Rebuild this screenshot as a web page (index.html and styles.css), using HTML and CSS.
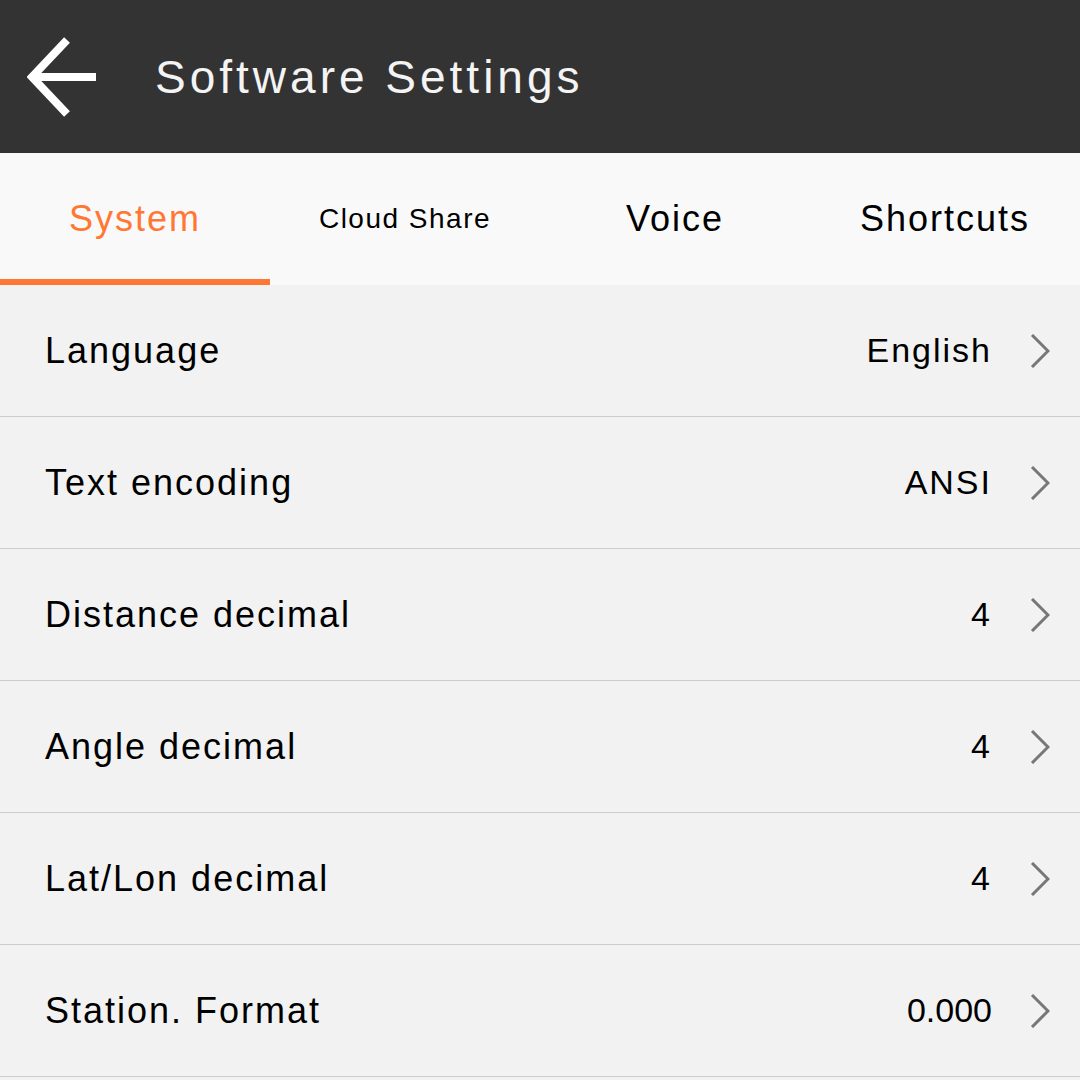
FILE: index.html
```html
<!DOCTYPE html>
<html lang="en">
<head>
  <meta charset="UTF-8">
  <title>Software Settings</title>
  <link rel="stylesheet" href="styles.css">
</head>
<body>

  <div class="topbar">
    <svg class="back" width="80" height="80" viewBox="0 0 80 80">
      <path d="M40 3 L5 40 L40 77 M5 40 L69 40" fill="none" stroke="#fff" stroke-width="8"/>
    </svg>
    <div class="title">Software Settings</div>
  </div>

  <div class="tabs">
    <div class="tab active">System</div>
    <div class="tab small">Cloud Share</div>
    <div class="tab">Voice</div>
    <div class="tab">Shortcuts</div>
  </div>

  <div class="list">
    <div class="row">
      <span class="label">Language</span>
      <span class="value">English</span>
      <svg class="chev" width="20" height="34" viewBox="0 0 20 34"><path d="M2 1 L18 17 L2 33" fill="none" stroke="#777" stroke-width="3"/></svg>
    </div>
    <div class="row">
      <span class="label">Text encoding</span>
      <span class="value">ANSI</span>
      <svg class="chev" width="20" height="34" viewBox="0 0 20 34"><path d="M2 1 L18 17 L2 33" fill="none" stroke="#777" stroke-width="3"/></svg>
    </div>
    <div class="row">
      <span class="label">Distance decimal</span>
      <span class="value">4</span>
      <svg class="chev" width="20" height="34" viewBox="0 0 20 34"><path d="M2 1 L18 17 L2 33" fill="none" stroke="#777" stroke-width="3"/></svg>
    </div>
    <div class="row">
      <span class="label">Angle decimal</span>
      <span class="value">4</span>
      <svg class="chev" width="20" height="34" viewBox="0 0 20 34"><path d="M2 1 L18 17 L2 33" fill="none" stroke="#777" stroke-width="3"/></svg>
    </div>
    <div class="row">
      <span class="label">Lat/Lon decimal</span>
      <span class="value">4</span>
      <svg class="chev" width="20" height="34" viewBox="0 0 20 34"><path d="M2 1 L18 17 L2 33" fill="none" stroke="#777" stroke-width="3"/></svg>
    </div>
    <div class="row">
      <span class="label">Station. Format</span>
      <span class="value num">0.000</span>
      <svg class="chev" width="20" height="34" viewBox="0 0 20 34"><path d="M2 1 L18 17 L2 33" fill="none" stroke="#777" stroke-width="3"/></svg>
    </div>
  </div>

</body>
</html>
```

FILE: styles.css
```css
body {
  margin: 0;
  padding: 0;
  font-family: "Liberation Sans", Arial, sans-serif;
  background-color: #f2f2f2;
  color: #000;
  width: 1080px;
  height: 1080px;
  overflow: hidden;
}

.topbar {
  height: 153px;
  background-color: #333333;
  display: flex;
  align-items: center;
  padding-left: 27px;
  box-sizing: border-box;
}

.back {
  margin-right: 48px;
}

.title {
  color: #f4f4f4;
  font-size: 46px;
  letter-spacing: 4px;
}

.tabs {
  display: flex;
  height: 132px;
  background-color: #f9f9f9;
}

.tab {
  flex: 1;
  display: flex;
  align-items: center;
  justify-content: center;
  font-size: 36px;
  letter-spacing: 2px;
  border-bottom: 6px solid transparent;
  padding-top: 6px;
}

.tab.small {
  font-size: 28px;
  letter-spacing: 1.5px;
}

.tab.active {
  color: #ff7733;
  border-bottom-color: #ff7733;
}

.row {
  height: 131px;
  border-bottom: 1px solid #cccccc;
  display: flex;
  align-items: center;
  padding: 0 30px 0 45px;
}

.label {
  flex: 1;
  font-size: 36px;
  letter-spacing: 2px;
}

.value {
  font-size: 34px;
  letter-spacing: 2px;
  margin-right: 38px;
}

.value.num {
  letter-spacing: 0;
}
```
